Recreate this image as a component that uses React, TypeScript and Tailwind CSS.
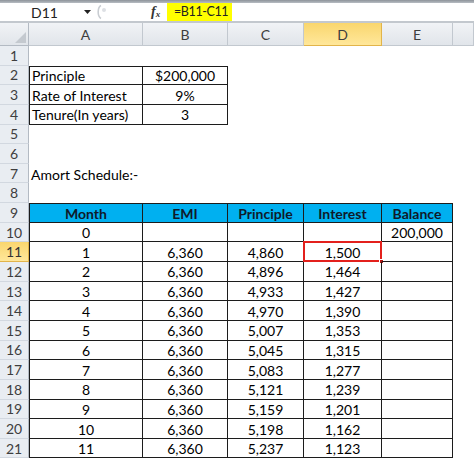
import React from "react";

const colW = ["w-[114px]", "w-[85px]", "w-[76px]", "w-[78px]", "w-[71px]", "flex-1"];
const letters = ["A", "B", "C", "D", "E", ""];

const principle = ["4,860", "4,896", "4,933", "4,970", "5,007", "5,045", "5,083", "5,121", "5,159", "5,198", "5,237"];
const interest = ["1,500", "1,464", "1,427", "1,390", "1,353", "1,315", "1,277", "1,239", "1,201", "1,162", "1,123"];

type Cell = { text?: string; left?: boolean; boxed?: boolean };
type Row = { cells: Cell[]; head?: boolean; top?: boolean };

function buildRows(): Row[] {
    const empty = (): Cell[] => Array.from({ length: 6 }, () => ({}));
    const rows: Row[] = [];
    rows.push({ cells: empty() });
    const inputs: [string, string][] = [
        ["Principle", "$200,000"],
        ["Rate of Interest", "9%"],
        ["Tenure(In years)", "3"],
    ];
    inputs.forEach(([a, b], i) => {
        const c = empty();
        c[0] = { text: a, left: true, boxed: true };
        c[1] = { text: b, boxed: true };
        rows.push({ cells: c, top: i === 0 });
    });
    rows.push({ cells: empty() });
    rows.push({ cells: empty() });
    const r7 = empty();
    r7[0] = { text: "Amort Schedule:-", left: true };
    rows.push({ cells: r7 });
    rows.push({ cells: empty() });
    const heads = ["Month", "EMI", "Principle", "Interest", "Balance"];
    const h = empty();
    heads.forEach((t, i) => (h[i] = { text: t, boxed: true }));
    rows.push({ cells: h, head: true, top: true });
    const r10 = empty();
    ["0", "", "", "", "200,000"].forEach((t, i) => (r10[i] = { text: t, boxed: true }));
    rows.push({ cells: r10 });
    for (let m = 0; m < 11; m++) {
        const c = empty();
        [String(m + 1), "6,360", principle[m], interest[m], ""].forEach((t, i) => (c[i] = { text: t, boxed: true }));
        rows.push({ cells: c });
    }
    return rows;
}

const rows = buildRows();

export default function App() {
    return (
        <div className="w-[474px] h-[458px] overflow-hidden bg-white font-['Lato',sans-serif] text-[14px] text-black whitespace-nowrap">
            {/* window strip */}
            <div className="h-[3px] bg-gradient-to-b from-[#8d939a] to-[#b8bdc3]" />

            {/* formula bar */}
            <div className="flex h-[18px] bg-white text-[14px] text-[#222]">
                <div className="w-[80px] pl-[31px] flex items-center">D11</div>
                <div className="w-[14px] flex items-center justify-center">
                    <svg width="7" height="4" viewBox="0 0 7 4">
                        <path d="M0 0h7L3.5 4z" fill="#222" />
                    </svg>
                </div>
                <div className="w-[18px] flex items-center">
                    <svg width="16" height="16" viewBox="0 0 16 16">
                        <path d="M7 1.5C3.5 3 3 12.5 7 14.5" stroke="#c9cdd2" strokeWidth="1.6" fill="none" />
                        <circle cx="10" cy="6" r="2" fill="#dde0e4" />
                    </svg>
                </div>
                <div className="w-[39px]" />
                <div className="w-[14px] flex items-center font-['Liberation_Serif',serif] italic font-bold text-[#333]">
                    <span className="text-[14px] leading-none">f</span>
                    <span className="text-[9px] leading-none mt-[4px]">x</span>
                </div>
                <div className="w-[2px]" />
                <div className="w-[65px] bg-[#ffff00] pl-[7px] flex items-center text-[12.5px] tracking-[-0.4px]">=B11-C11</div>
                <div className="flex-1" />
            </div>
            <div className="h-[2px] bg-[#c3c8ce]" />

            {/* column headers */}
            <div className="flex h-[23px] text-[14px] text-[#3e3e3e]">
                <div className="w-[29px] relative bg-gradient-to-b from-[#f1f3f6] to-[#e1e5ea] border-r border-b border-[#b3bac3]">
                    <svg className="absolute right-[2px] bottom-[2px]" width="11" height="11" viewBox="0 0 11 11">
                        <path d="M11 0V11H0z" fill="#c4c9cf" />
                    </svg>
                </div>
                {letters.map((l, i) => (
                    <div
                        key={i}
                        className={`${colW[i]} flex items-center justify-center border-b border-r ${
                            l === "D"
                                ? "bg-gradient-to-b from-[#f9d66d] to-[#ffe79a] border-[#e2b44a]"
                                : "bg-gradient-to-b from-[#f1f3f6] to-[#e1e5ea] border-[#c2c8cf]"
                        }`}
                    >
                        {l}
                    </div>
                ))}
            </div>

            {/* grid */}
            {rows.map((row, r) => {
                const n = r + 1;
                return (
                    <div key={n} className="flex h-[19.65px]">
                        <div
                            className={`w-[29px] flex items-center justify-center text-[14px] border-r border-b ${
                                n === 11
                                    ? "bg-gradient-to-b from-[#f9d66d] to-[#ffe79a] border-[#e2b44a] text-[#333]"
                                    : "bg-[#e9edf2] border-r-[#b3bac3] border-b-[#d2d8e0] text-[#3e3e3e]"
                            }`}
                        >
                            {n}
                        </div>
                        {row.cells.map((c, i) => (
                            <div
                                key={i}
                                className={`${colW[i]} relative flex items-center pt-[1px] ${
                                    c.left ? "justify-start pl-[2px]" : "justify-center"
                                } ${c.boxed ? "border-r border-b border-[#1c1c1c]" : ""} ${
                                    c.boxed && i === 0 ? "border-l" : ""
                                } ${c.boxed && row.top ? "border-t" : ""} ${
                                    row.head && c.boxed ? "bg-[#00b0f0] font-bold text-[#0f1a2a]" : ""
                                }`}
                            >
                                {c.text}
                                {n === 11 && i === 3 && (
                                    <>
                                        <div className="absolute -inset-px border-2 border-[#e3201c]" />
                                        <div className="absolute -right-[3px] -bottom-[3px] w-[5px] h-[5px] bg-[#b3120f] border border-white" />
                                    </>
                                )}
                            </div>
                        ))}
                    </div>
                );
            })}
        </div>
    );
}
